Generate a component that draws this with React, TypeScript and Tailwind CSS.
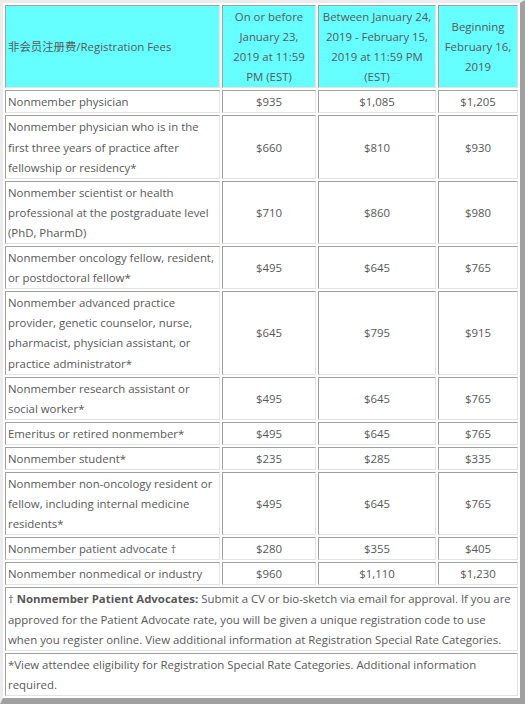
import React from "react";

type Row = { label: React.ReactNode; a: string; b: string; c: string };

const rows: Row[] = [
  { label: <>Nonmember physician</>, a: "$935", b: "$1,085", c: "$1,205" },
  {
    label: (
      <>
        Nonmember physician who is in the<br />first three years of practice after<br />fellowship or residency*
      </>
    ),
    a: "$660",
    b: "$810",
    c: "$930",
  },
  {
    label: (
      <>
        Nonmember scientist or health<br />professional at the postgraduate level<br />(PhD, PharmD)
      </>
    ),
    a: "$710",
    b: "$860",
    c: "$980",
  },
  {
    label: (
      <>
        Nonmember oncology fellow, resident,<br />or postdoctoral fellow*
      </>
    ),
    a: "$495",
    b: "$645",
    c: "$765",
  },
  {
    label: (
      <>
        Nonmember advanced practice<br />provider, genetic counselor, nurse,<br />pharmacist, physician assistant, or<br />practice administrator*
      </>
    ),
    a: "$645",
    b: "$795",
    c: "$915",
  },
  {
    label: (
      <>
        Nonmember research assistant or<br />social worker*
      </>
    ),
    a: "$495",
    b: "$645",
    c: "$765",
  },
  { label: <>Emeritus or retired nonmember*</>, a: "$495", b: "$645", c: "$765" },
  { label: <>Nonmember student*</>, a: "$235", b: "$285", c: "$335" },
  {
    label: (
      <>
        Nonmember non-oncology resident or<br />fellow, including internal medicine<br />residents*
      </>
    ),
    a: "$495",
    b: "$645",
    c: "$765",
  },
  { label: <>Nonmember patient advocate †</>, a: "$280", b: "$355", c: "$405" },
  { label: <>Nonmember nonmedical or industry</>, a: "$960", b: "$1,110", c: "$1,230" },
];

const cell =
  "border border-t-[#a0a0a0] border-l-[#a0a0a0] border-b-[#e3e3e3] border-r-[#e3e3e3] px-0 pt-[1px] pb-0 align-middle";

export default function App() {
  return (
    <div
      className="w-[525px] h-[705px] bg-white overflow-hidden"
      style={{ fontFamily: '"Open Sans", "Noto Sans CJK SC", sans-serif' }}
    >
      <div className="w-[525px] border-l-[3px] border-t-[3px] border-l-[#ececec] border-t-[#ececec] border-r-[5px] border-b-[6px] border-r-[#a0a0a0] border-b-[#a0a0a0] bg-white">
        <table className="w-[517px] table-fixed border-separate border-spacing-[2px] text-[11.4px] leading-[20.1px] text-[#585858]">
          <colgroup>
            <col className="w-[215px]" />
            <col className="w-[94px]" />
            <col className="w-[118px]" />
            <col className="w-[80px]" />
          </colgroup>
          <tbody>
            <tr>
              <td className={`${cell} bg-[#66ffff] pl-[2px] text-left`}>非会员注册费/Registration Fees</td>
              <td className={`${cell} bg-[#66ffff] text-center`}>
                On or before<br />January 23,<br />2019 at 11:59<br />PM (EST)
              </td>
              <td className={`${cell} bg-[#66ffff] text-center`}>
                Between January 24,<br />2019 - February 15,<br />2019 at 11:59 PM<br />(EST)
              </td>
              <td className={`${cell} bg-[#66ffff] text-center`}>
                Beginning<br />February 16,<br />2019
              </td>
            </tr>
            {rows.map((r, i) => (
              <tr key={i}>
                <td className={`${cell} pl-[2px] text-left whitespace-nowrap`}>{r.label}</td>
                <td className={`${cell} text-center`}>{r.a}</td>
                <td className={`${cell} text-center`}>{r.b}</td>
                <td className={`${cell} text-center`}>{r.c}</td>
              </tr>
            ))}
            <tr>
              <td colSpan={4} className={`${cell} pl-[2px] text-left whitespace-nowrap`}>
                † <span className="font-bold">Nonmember Patient Advocates:</span> Submit a CV or bio-sketch via email for approval. If you are
                <br />
                approved for the Patient Advocate rate, you will be given a unique registration code to use
                <br />
                when you register online. View additional information at Registration Special Rate Categories.
              </td>
            </tr>
            <tr>
              <td colSpan={4} className={`${cell} pl-[2px] text-left whitespace-nowrap`}>
                *View attendee eligibility for Registration Special Rate Categories. Additional information
                <br />
                required.
              </td>
            </tr>
          </tbody>
        </table>
      </div>
    </div>
  );
}
